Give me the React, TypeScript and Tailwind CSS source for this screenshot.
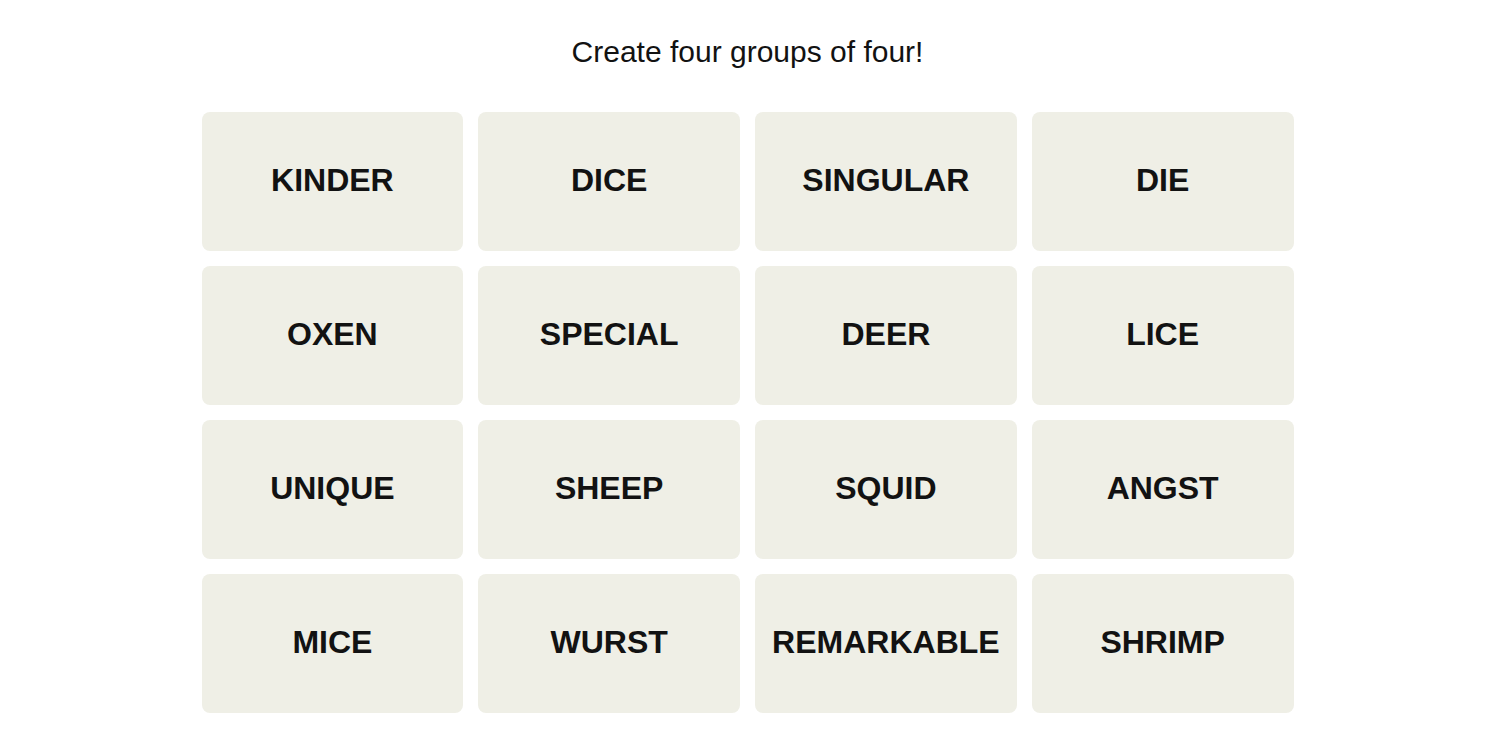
const words = [
  "KINDER",
  "DICE",
  "SINGULAR",
  "DIE",
  "OXEN",
  "SPECIAL",
  "DEER",
  "LICE",
  "UNIQUE",
  "SHEEP",
  "SQUID",
  "ANGST",
  "MICE",
  "WURST",
  "REMARKABLE",
  "SHRIMP",
];

export default function App() {
  return (
    <div className="min-h-screen bg-white pr-[5px] font-['Liberation_Sans',Arial,sans-serif] text-[#121212]">
      <p className="pt-[33px] text-center text-[30px] leading-[38px]">
        Create four groups of four!
      </p>
      <div className="mx-auto mt-[41px] grid w-[1092px] grid-cols-4 gap-x-[15px] gap-y-[15px]">
        {words.map((word) => (
          <button
            key={word}
            className="flex h-[139px] items-center justify-center rounded-lg bg-[#efefe6] pb-1 text-[32px] font-bold"
          >
            {word}
          </button>
        ))}
      </div>
    </div>
  );
}
